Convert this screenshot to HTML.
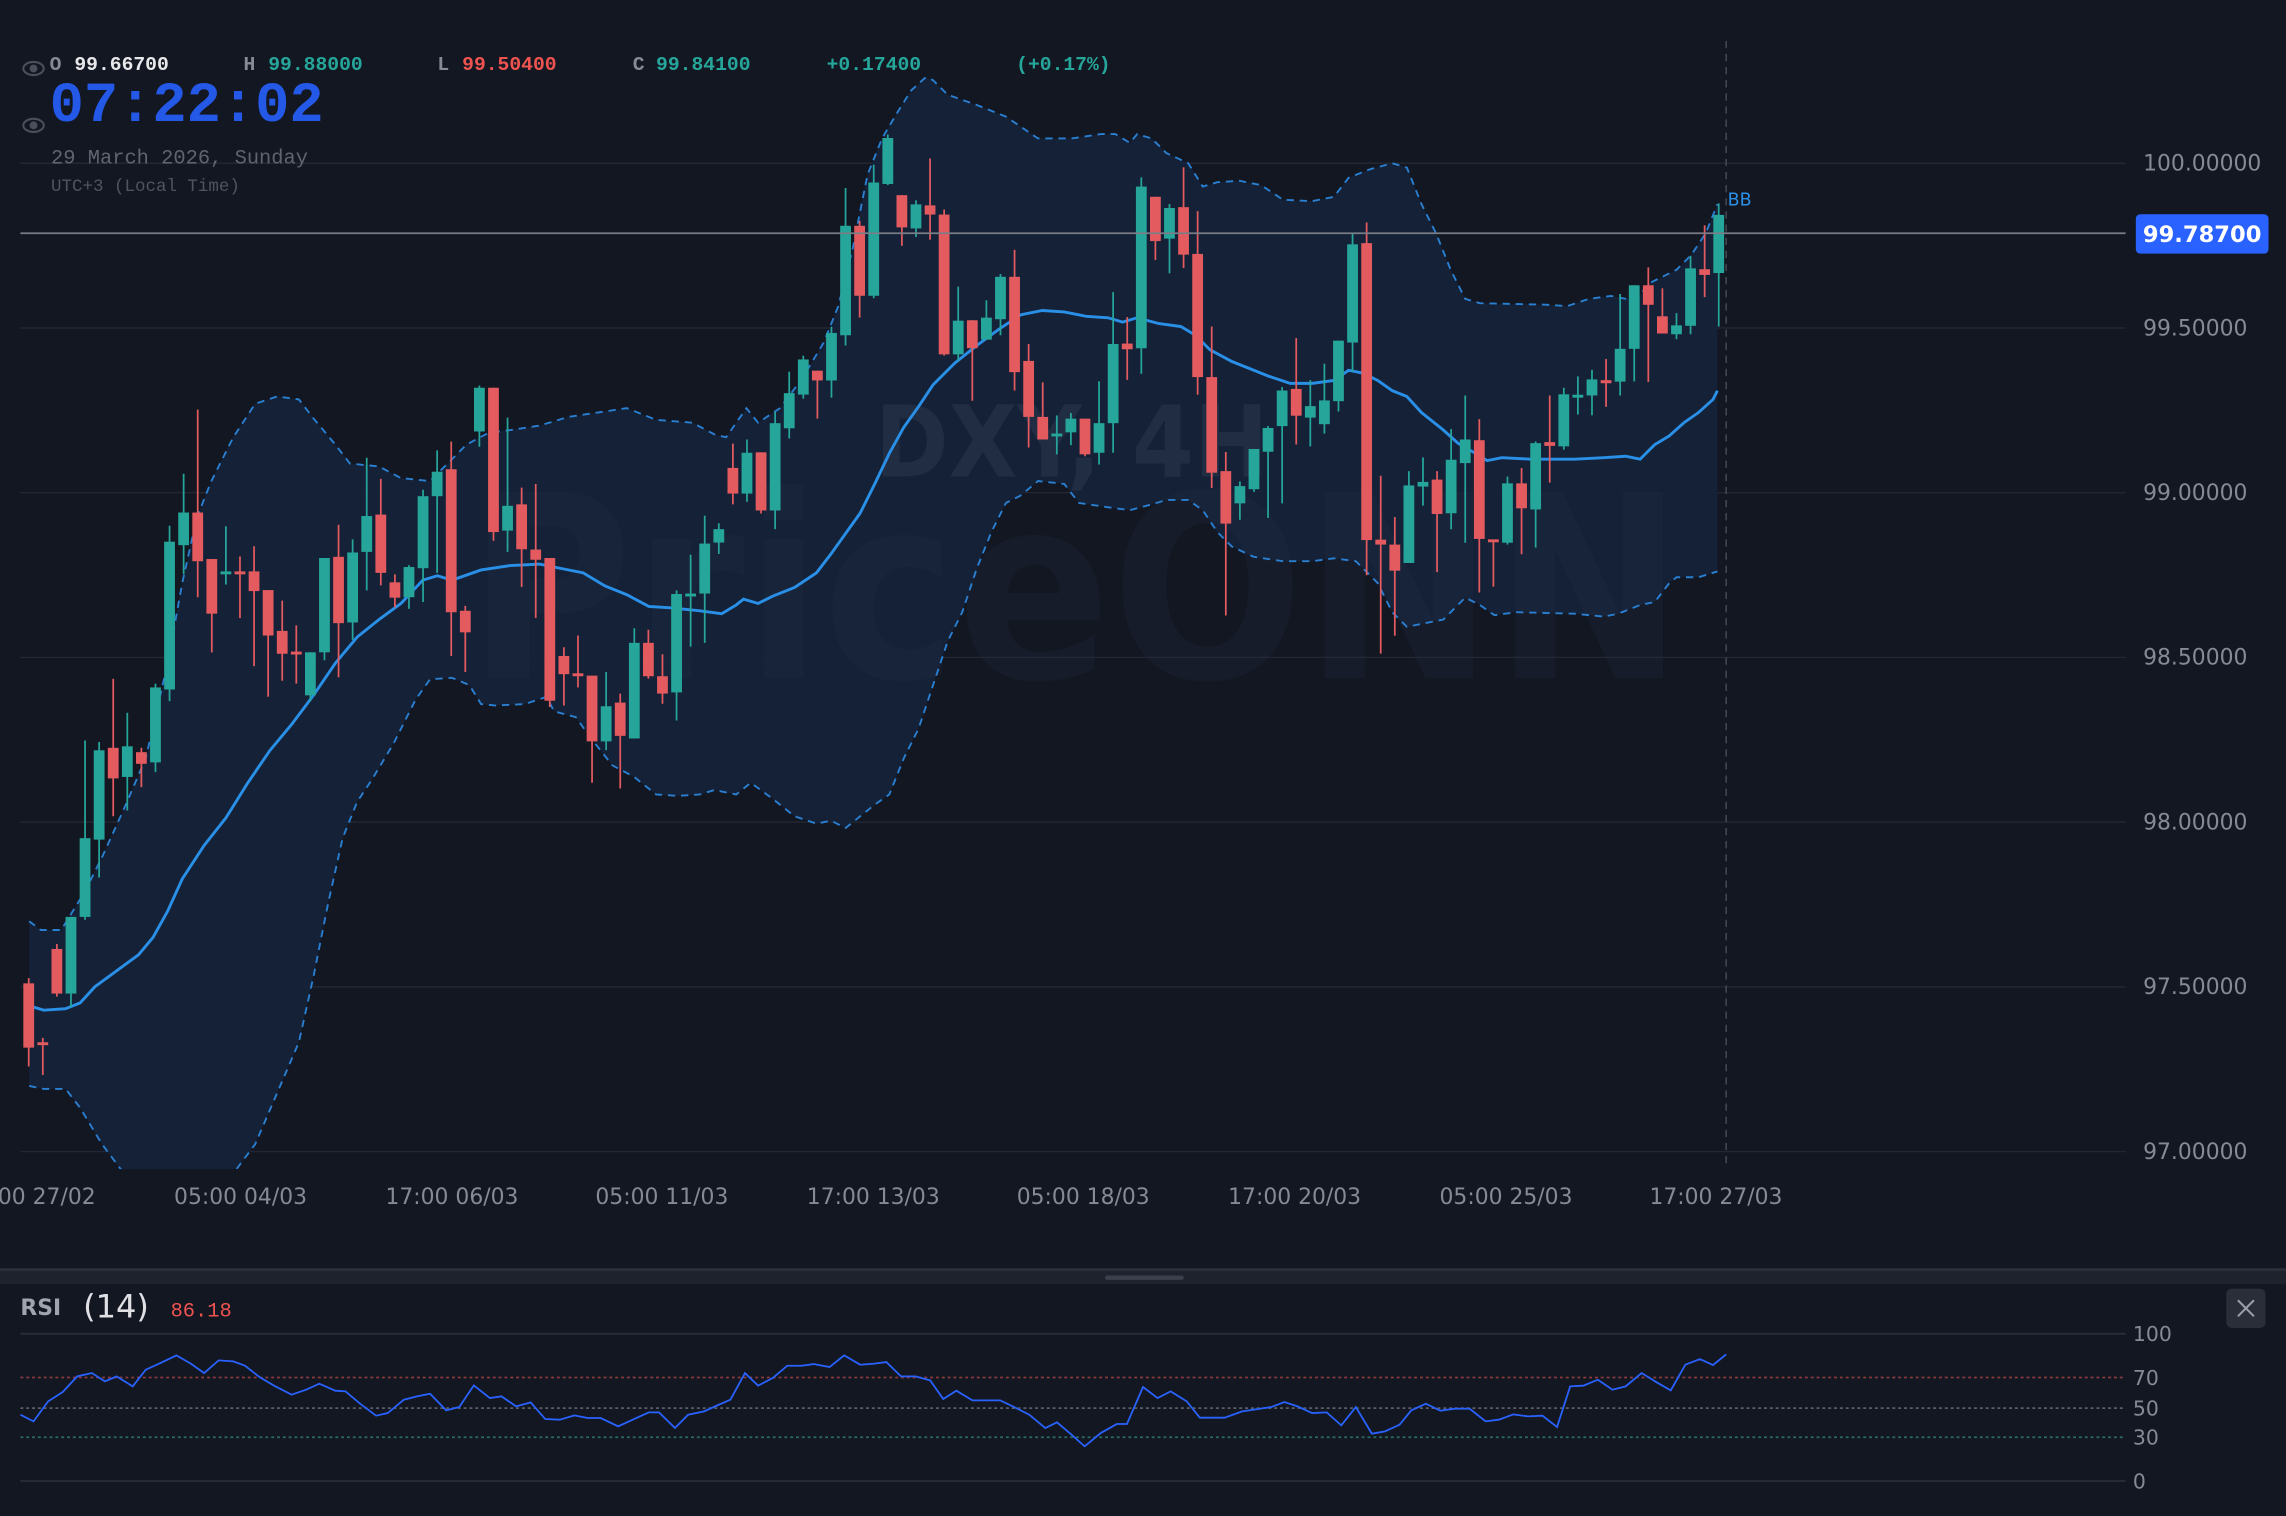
<!DOCTYPE html>
<html><head><meta charset="utf-8">
<style>
html,body{margin:0;padding:0;background:#131722;overflow:hidden}
svg{display:block}
.m{font-family:"Liberation Mono",monospace}
.s{font-family:"DejaVu Sans","Liberation Sans",sans-serif}
</style></head>
<body>
<svg id="c" width="2286" height="1516" viewBox="0 0 1568 1040" preserveAspectRatio="none" xmlns="http://www.w3.org/2000/svg">
<rect width="1568" height="1040" fill="#131722"/>
<defs><clipPath id="cp"><rect x="14" y="0" width="1444" height="802"/></clipPath></defs>
<g stroke="#222733" stroke-width="1">
<line x1="14" y1="112" x2="1458" y2="112"/><line x1="14" y1="225" x2="1458" y2="225"/>
<line x1="14" y1="338" x2="1458" y2="338"/><line x1="14" y1="451" x2="1458" y2="451"/>
<line x1="14" y1="564" x2="1458" y2="564"/><line x1="14" y1="677" x2="1458" y2="677"/>
<line x1="14" y1="790" x2="1458" y2="790"/>
</g>
<g clip-path="url(#cp)">
<path id="band" fill="#15223a" fill-opacity="0.9"/>
<text x="320" y="465" class="s" font-weight="bold" font-size="175" fill="#2a3448" fill-opacity="0.22" textLength="835" lengthAdjust="spacingAndGlyphs">PriceONN</text>
<text x="600" y="327" class="s" font-weight="bold" font-size="68" fill="#2e3a4e" fill-opacity="0.5" textLength="270" lengthAdjust="spacingAndGlyphs">DXY, 4H</text>
<polyline id="up" fill="none" stroke="#2a7fd0" stroke-width="1.3" stroke-dasharray="5,4"/>
<polyline id="lo" fill="none" stroke="#2a7fd0" stroke-width="1.3" stroke-dasharray="5,4"/>
<polyline id="mid" fill="none" stroke="#2a8fe6" stroke-width="2"/>
<g id="cd"></g>
</g>
<line x1="14" y1="160" x2="1458" y2="160" stroke="#7a7d86" stroke-width="1.2"/>
<line x1="1184" y1="28" x2="1184" y2="802" stroke="#454a56" stroke-width="1" stroke-dasharray="5,4"/>
<text x="1185" y="141" class="s" font-size="12" fill="#2a8fe6">BB</text>
<rect x="1465" y="147" width="91" height="27" rx="3" fill="#2962ff"/>
<text x="1510.5" y="166" class="s" font-size="15.5" font-weight="bold" fill="#fff" text-anchor="middle">99.78700</text>
<g class="s" font-size="15" fill="#868a95">
<text x="1470" y="117">100.00000</text><text x="1470" y="230">99.50000</text>
<text x="1470" y="343">99.00000</text><text x="1470" y="456">98.50000</text>
<text x="1470" y="569">98.00000</text><text x="1470" y="682">97.50000</text>
<text x="1470" y="795">97.00000</text>
</g>
<g class="s" font-size="15" fill="#868a95" text-anchor="middle">
<text x="20" y="826">17:00 27/02</text><text x="165" y="826">05:00 04/03</text>
<text x="310" y="826">17:00 06/03</text><text x="454" y="826">05:00 11/03</text>
<text x="599" y="826">17:00 13/03</text><text x="743" y="826">05:00 18/03</text>
<text x="888" y="826">17:00 20/03</text><text x="1033" y="826">05:00 25/03</text>
<text x="1177" y="826">17:00 27/03</text>
</g>
<g fill="none" stroke="#4a4f5c" stroke-width="1.4">
<ellipse cx="23" cy="47" rx="7" ry="4.5"/><circle cx="23" cy="47" r="2" fill="#4a4f5c"/>
<ellipse cx="23" cy="86" rx="7" ry="4.5"/><circle cx="23" cy="86" r="2" fill="#4a4f5c"/>
</g>
<g class="m" font-size="13.5" font-weight="bold">
<text x="34" y="48" fill="#868a95">O</text><text x="51" y="48" fill="#e8e8ea">99.66700</text>
<text x="167" y="48" fill="#868a95">H</text><text x="184" y="48" fill="#26a69a">99.88000</text>
<text x="300" y="48" fill="#868a95">L</text><text x="317" y="48" fill="#ef5350">99.50400</text>
<text x="434" y="48" fill="#868a95">C</text><text x="450" y="48" fill="#26a69a">99.84100</text>
<text x="567" y="48" fill="#26a69a">+0.17400</text>
<text x="697" y="48" fill="#26a69a">(+0.17%)</text>
</g>
<text x="34" y="83" class="m" font-size="39" font-weight="bold" fill="#2458e6" textLength="188" lengthAdjust="spacingAndGlyphs">07:22:02</text>
<text x="35" y="112" class="m" font-size="14" fill="#5f6470">29 March 2026, Sunday</text>
<text x="35" y="131" class="m" font-size="12" fill="#4f545f">UTC+3 (Local Time)</text>
<rect x="0" y="870" width="1568" height="11" fill="#1e222d"/>
<rect x="0" y="870" width="1568" height="2" fill="#2a2e39"/>
<rect x="758" y="875" width="54" height="3" rx="1.5" fill="#3a3f4b"/>
<text x="14" y="902" class="s" font-size="15" font-weight="bold" fill="#a0a4ae">RSI</text>
<text x="57" y="904" class="s" font-size="22" fill="#e0e0e4">(14)</text>
<text x="117" y="903" class="m" font-size="14" fill="#ef5350">86.18</text>
<rect x="1527" y="884" width="27" height="27" rx="4" fill="#2a2e39"/>
<path d="M1535 892 L1546 903 M1546 892 L1535 903" stroke="#9aa0aa" stroke-width="1.4"/>
<line x1="14" y1="915" x2="1458" y2="915" stroke="#2a2e39" stroke-width="1.2"/>
<line x1="14" y1="1016" x2="1458" y2="1016" stroke="#2a2e39" stroke-width="1.2"/>
<line x1="14" y1="945" x2="1458" y2="945" stroke="#8a3a3d" stroke-width="1.2" stroke-dasharray="2,2"/>
<line x1="14" y1="966" x2="1458" y2="966" stroke="#5a5e68" stroke-width="1.2" stroke-dasharray="2,2"/>
<line x1="14" y1="986" x2="1458" y2="986" stroke="#2a6a64" stroke-width="1.2" stroke-dasharray="2,2"/>
<g class="s" font-size="14" fill="#868a95">
<text x="1463" y="920">100</text><text x="1463" y="950">70</text><text x="1463" y="971">50</text>
<text x="1463" y="991">30</text><text x="1463" y="1021">0</text>
</g>
<g transform="translate(0,864.2) scale(1,0.22862)">
<polyline fill="none" stroke="#2962ff" stroke-width="1.8" vector-effect="non-scaling-stroke" points="14,465 23,485 33,425 43,397 53,350 63,340 72,365 80,350 91,380 100,330 110,310 121,287 131,312 140,340 150,302 160,305 168,318 178,352 188,378 200,405 210,390 219,372 230,393 237,395 247,432 258,468 266,460 277,420 286,410 295,402 306,452 315,442 325,377 336,415 344,410 354,440 364,428 374,478 384,480 394,467 403,475 412,475 424,500 434,480 445,458 452,458 463,505 472,465 483,455 492,437 501,420 511,340 520,378 530,355 540,318 550,318 558,313 569,322 579,287 590,315 599,312 608,307 618,350 628,350 638,362 647,418 656,393 667,422 686,422 696,443 706,465 717,505 725,488 735,525 744,560 755,520 766,493 773,493 784,382 794,415 803,395 814,425 823,474 840,474 852,455 863,448 872,442 881,427 890,440 900,460 910,458 920,497 930,442 941,522 950,515 960,495 968,452 978,432 988,453 998,447 1008,447 1019,485 1028,480 1038,464 1048,470 1058,468 1068,502 1077,380 1086,378 1096,360 1106,390 1115,380 1126,340 1136,367 1146,392 1156,315 1166,298 1175,316 1184,284"/>
</g>
</svg>
<script>
var NS='http://www.w3.org/2000/svg';
var D=[[674.6,718.7,671,731.6],[716,716.5,712,737.5],[651,681.6,647.6,683.7],[681.6,629,629,691],[629,575,508,631],[576,514.7,509,602],[513,534,465.7,560],[533,512,489,556],[516,524,513,540],[523,471.6,469,529.7],[473,371.6,360.7,481],[374,351.6,325,394],[351.6,385,281,409.7],[383.5,421,383.5,447.5],[393.5,393,361,401],[393,393.5,381.7,424],[392,405.5,374.7,457],[404.8,436,404.8,478],[432.8,448.5,412,467],[448,449,429,469],[477,447.5,447.5,481],[447.5,382.8,382.8,453],[382,427.5,360,464.6],[427,379,370,439],[378.6,354,314,405],[353,393,328.5,401.6],[399.5,410,394,416.7],[409.7,389,387.7,417.7],[389.8,340.4,336,413],[340.4,323.6,309,393],[321.9,420,303,450],[419,433.8,415.6,461],[296,266,264.5,306.5],[266,365,266,371],[364,347,286.5,378.6],[346,376.8,334.5,402.7],[377,384,332,424],[382.8,480.7,382.8,485],[450,462.5,444,484],[462.9,463.9,436,471.6],[463.5,508.6,463.5,537],
[508.6,484.5,461,514.6],[482,504.8,475.8,540.9],[506.6,441,431,506.6],[441,463.9,432,465.6],[463.9,475.8,448.8,482.8],[475,407.5,405,494.3],[408.7,408.2,380.6,443.6],[407.2,372.9,353.7,441],[372.2,363,359,380],[321,338.6,304.3,346],[338.6,310.6,301.5,344.2],[310.3,350.2,310.3,352.3],[350.2,290.3,282.6,363],[293.8,269.7,255,300.8],[270.7,246.6,244,273.5],[254.3,261,254.3,287.2],[261,228.4,224.2,272.8],[230,154.9,129,237],[154.9,202.9,151.4,217.9],[202.9,125.2,113,204.6],[126.2,94.7,92.3,127],[133.9,156,133.9,168.6],[156.7,140.2,137.4,162.6],[140.9,147.2,108.7,164.4],[147.2,243.1,143.7,244],[243.1,220,196.6,247.6],[219.7,238.9,219.7,274.9],[233,217.9,206,233],[219,189.9,188,230],[189.9,255.3,171.4,268],[247.6,286,236,307],[286,301.5,262.3,301.5],[298.9,298.4,285,311.7],[296.6,287.2,283.3,305.4],[287.2,311.7,287.2,313],[310.6,290.3,261.6,318.7],[290.3,236,200.4,310.6],[235.7,239.6,217.5,260.6],[238.9,128,121.7,256.4],[135,165.4,135,178.4],[163.7,142.7,139.9,187.5],
[142.1,174.7,114.8,183.9],[174.2,258.7,144.8,270.8],[258.7,324.3,224,334.8],[323.2,359.2,310.1,422.2],[345.3,333.5,330.3,356.6],[335.6,308,308,337.4],[309.9,293.6,292.3,355.3],[292.3,267.9,265.5,345.3],[266.8,285.2,231.9,304.9],[286.5,278.6,260.8,306.2],[291,274.7,249.5,297.5],[275.2,233.7,233.7,282.3],[235,167.6,160.5,255],[166.8,370.5,152.6,394.6],[370.2,373.6,326.4,448.4],[373.6,391.5,354.7,436.1],[386.2,333,323.2,386.2],[333.8,330.6,313.8,346.9],[329,352.6,323.2,392.5],[352.1,315.4,294.4,363.1],[317.7,301.5,271.3,372.3],[302,369.7,287.5,406.5],[371,372.8,371,402.5],[372.3,331.6,326.9,373.6],[331.6,348.7,321.1,380.2],[349.5,304,302.8,375.7],[303.3,305.9,271.3,331.1],[306.2,270.5,266,308.5],[272.8,271.8,258.2,284.4],[271.3,260.3,253.7,284.9],[260.8,262.9,246.3,279.1],[261.8,239.3,201.7,271.3],[239.3,195.7,195.7,261.6],[195.7,209.1,183.4,262.1],[217,228.8,197.8,228.8],[229.3,223.2,214.8,232.7],[223.5,184.1,175.5,229.3],[184.7,188.6,154.5,203.8],[187.3,147.4,139.5,224]];
var g=document.getElementById('cd');
function el(n,a){var e=document.createElementNS(NS,n);for(var k in a)e.setAttribute(k,a[k]);g.appendChild(e);}
D.forEach(function(d,i){var x=19.7+i*9.66,o=d[0],c=d[1],h=d[2],l=d[3];var up=(c<=o);var col=up?'#26a69a':'#e35a5f';
var t=Math.min(o,c),b=Math.max(o,c);if(b-t<2){t-=1;b=t+2;}
el('line',{x1:x,y1:h,x2:x,y2:l,stroke:col,'stroke-width':1.2});
el('rect',{x:x-3.7,y:t,width:7.4,height:b-t,fill:col});});
var U=[[20,632],[28,638],[42,638],[50,625],[58,612],[70,588],[85,555],[100,520],[115,455],[125,400],[135,355],[145,330],[160,300],[175,277],[190,272],[205,274],[215,287],[230,305],[240,318],[260,320],[275,328],[295,330],[305,320],[320,305],[335,297],[350,295],[370,292],[390,286],[410,283],[430,280],[450,288],[475,290],[490,298],[498,300],[505,290],[512,280],[520,290],[535,280],[550,260],[565,235],[575,210],[585,170],[595,120],[605,95],[615,78],[625,62],[635,53],[640,55],[650,65],[670,72],[690,80],[712,95],[735,95],[755,92],[765,92],[775,98],[780,92],[790,95],[800,105],[815,112],[825,128],[835,125],[850,124],[865,127],[880,137],[900,138],[915,135],[925,122],[940,116],[955,112],[965,115],[975,140],[985,160],[995,185],[1005,205],[1015,208],[1060,209],[1075,210],[1090,205],[1105,203],[1115,205],[1125,203],[1130,195],[1140,190],[1150,185],[1160,175],[1170,160],[1178,140]];
var L=[[20,745],[30,747],[45,747],[55,760],[70,785],[85,805],[100,815],[140,815],[160,805],[175,785],[190,750],[205,715],[215,670],[225,620],[235,575],[245,550],[255,535],[270,510],[285,480],[295,466],[310,465],[322,470],[330,483],[340,484],[360,483],[375,478],[380,488],[395,492],[405,506],[420,525],[435,533],[450,545],[465,546],[480,545],[490,542],[505,545],[515,537],[530,548],[545,560],[560,565],[570,563],[580,568],[590,560],[600,552],[610,545],[620,520],[630,500],[640,470],[650,440],[660,420],[670,390],[680,365],[690,345],[700,340],[712,330],[730,332],[740,345],[760,348],[775,350],[790,346],[800,343],[815,343],[825,350],[835,365],[845,375],[860,382],[880,385],[900,385],[915,383],[930,385],[945,400],[955,420],[965,430],[980,427],[990,425],[1000,415],[1005,410],[1015,415],[1025,422],[1040,420],[1080,421],[1100,423],[1110,421],[1125,415],[1135,413],[1145,400],[1150,396],[1165,396],[1178,392]];
var M=[[20,690],[30,693],[45,692],[55,688],[65,677],[80,666],[95,655],[105,643],[115,625],[125,603],[140,580],[155,561],[170,537],[185,515],[200,497],[215,477],[230,455],[245,437],[260,425],[275,414],[290,398],[300,395],[310,398],[330,391],[350,388],[370,387],[385,390],[400,393],[415,402],[430,408],[445,416],[460,417],[480,419],[495,421],[505,415],[510,411],[520,414],[530,409],[545,403],[560,393],[570,380],[580,366],[590,352],[600,332],[610,311],[620,293],[630,279],[640,264],[655,249],[670,237],[685,226],[700,216],[715,213],[730,214],[745,217],[760,218],[770,221],[780,218],[795,222],[810,224],[820,230],[830,240],[845,248],[860,254],[870,258],[885,263],[900,263],[915,261],[925,254],[935,256],[945,261],[955,268],[965,272],[975,283],[990,295],[1000,304],[1012,311],[1020,316],[1030,314],[1050,315],[1080,315],[1100,314],[1115,313],[1125,315],[1135,305],[1145,299],[1155,290],[1165,283],[1175,274],[1178,268]];
function P(a){return a.map(function(p){return p[0]+','+p[1]}).join(' ')}
document.getElementById('up').setAttribute('points',P(U));
document.getElementById('lo').setAttribute('points',P(L));
document.getElementById('mid').setAttribute('points',P(M));
var d='M'+U.map(function(p){return p[0]+' '+p[1]}).join(' L')+' L'+L.slice().reverse().map(function(p){return p[0]+' '+p[1]}).join(' L')+' Z';
document.getElementById('band').setAttribute('d',d);
</script>
</body></html>
